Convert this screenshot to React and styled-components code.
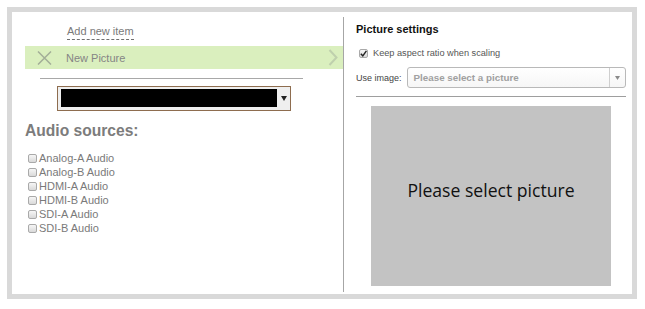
import React from "react";
import styled, { createGlobalStyle } from "styled-components";

const Global = createGlobalStyle`
  html, body { margin: 0; padding: 0; background: #ffffff; }
  body { font-family: "Liberation Sans", Arial, sans-serif; }
  * { box-sizing: border-box; }
`;

const Frame = styled.div`
  margin: 7px 0 0 7px;
  width: 630px;
  height: 292px;
  border: 5px solid #d9d9d9;
  background: #fff;
  display: flex;
  padding: 5px 0 2px 0;
`;

const LeftCol = styled.div`
  width: 332px;
  border-right: 1px solid #a6a6a6;
  display: flex;
  flex-direction: column;
  padding-top: 8px;
`;

const RightCol = styled.div`
  flex: 1;
  display: flex;
  flex-direction: column;
  padding: 5px 6px 0 12px;
  margin-bottom: -2px;
`;

const AddLink = styled.span`
  align-self: flex-start;
  margin-left: 55px;
  font-size: 11px;
  line-height: 13px;
  color: #7a7a7a;
  padding-bottom: 1px;
  border-bottom: 1px dashed #707070;
`;

const ItemRow = styled.div`
  margin: 6px 0 0 13px;
  height: 23px;
  background: #daefbe;
  display: flex;
  align-items: center;
  padding-left: 12px;
`;

const ItemText = styled.span`
  margin-left: 14px;
  font-size: 11px;
  color: #858585;
  flex: 1;
`;

const Rule = styled.div`
  height: 1px;
  background: ${(p) => p.color || "#a8a8a8"};
  margin: ${(p) => p.m};
  width: ${(p) => p.w};
`;

const DarkSelect = styled.div`
  margin: 7px 0 0 45px;
  width: 234px;
  height: 25px;
  border: 1px solid #8e6d4f;
  background: #efefef;
  display: flex;
  align-items: center;
  padding: 2px 0 3px 3px;
`;

const BlackBar = styled.div`
  width: 216px;
  height: 18px;
  background: #000;
  align-self: flex-start;
`;

const ArrowBox = styled.div`
  flex: 1;
  display: flex;
  justify-content: center;
  align-items: center;
`;

const SectionTitle = styled.div`
  margin: 11px 0 0 13px;
  font-size: 15.6px;
  line-height: 18px;
  font-weight: bold;
  color: #7c7c7c;
`;

const SourceList = styled.div`
  margin: 11px 0 0 16px;
  display: flex;
  flex-direction: column;
`;

const SourceRow = styled.label`
  display: flex;
  align-items: center;
  height: 14px;
  font-size: 11px;
  color: #7a7a7a;
  gap: 2px;
`;

const Box = styled.span`
  width: 9px;
  height: 9px;
  border: 1px solid #a9a9a9;
  border-radius: 2px;
  background: linear-gradient(#f6f6f6, #d9d9d9);
  display: inline-flex;
  align-items: center;
  justify-content: center;
  flex: none;
  margin-top: ${(p) => p.mt || "1px"};
`;

const Heading = styled.div`
  font-size: 11px;
  line-height: 14px;
  font-weight: bold;
  color: #111;
`;

const CheckRow = styled.div`
  margin: 11px 0 0 3px;
  height: 12px;
  display: flex;
  align-items: center;
  gap: 5px;
  font-size: 9.2px;
  color: #555;
`;

const FieldRow = styled.div`
  margin-top: 8px;
  display: flex;
  align-items: center;
  gap: 5px;
  font-size: 9px;
  color: #444;
`;

const Select = styled.div`
  width: 219px;
  height: 21px;
  border: 1px solid #b9b9b9;
  border-radius: 3px;
  background: linear-gradient(#ffffff, #f6f6f6);
  display: flex;
  align-items: stretch;
`;

const SelectValue = styled.span`
  flex: 1;
  display: flex;
  align-items: center;
  padding-left: 6px;
  font-size: 9.8px;
  font-weight: bold;
  color: #a0a0a0;
`;

const SelectArrow = styled.span`
  width: 16px;
  border-left: 1px solid #cfcfcf;
  display: flex;
  align-items: center;
  justify-content: center;
`;

const Preview = styled.div`
  margin: 9px 0 0 15px;
  width: 240px;
  height: 180px;
  background: #c3c3c3;
  display: flex;
  align-items: center;
  justify-content: center;
  font-family: "Open Sans", "Noto Sans", sans-serif;
  font-size: 17.6px;
  color: #111;
  padding-bottom: 12px;
`;

const sources = [
  "Analog-A Audio",
  "Analog-B Audio",
  "HDMI-A Audio",
  "HDMI-B Audio",
  "SDI-A Audio",
  "SDI-B Audio",
];

export default function App() {
  return (
    <>
      <Global />
      <Frame>
        <LeftCol>
          <AddLink>Add new item</AddLink>
          <ItemRow>
            <svg width="15" height="14" viewBox="0 0 15 14">
              <path d="M1 0.5 L14 13.5 M14 0.5 L1 13.5" stroke="#a3ae98" strokeWidth="1.5" fill="none" />
            </svg>
            <ItemText>New Picture</ItemText>
            <svg width="10" height="17" viewBox="0 0 10 17" style={{ marginRight: 5 }}>
              <path d="M1.5 1 L8.5 8.5 L1.5 16" stroke="#bfd0ad" strokeWidth="2" fill="none" />
            </svg>
          </ItemRow>
          <Rule m="9px 0 0 28px" w="263px" color="#a8a8a8" />
          <DarkSelect>
            <BlackBar />
            <ArrowBox>
              <svg width="6" height="5" viewBox="0 0 6 5">
                <polygon points="0,0 6,0 3,5" fill="#222" />
              </svg>
            </ArrowBox>
          </DarkSelect>
          <SectionTitle>Audio sources:</SectionTitle>
          <SourceList>
            {sources.map((s) => (
              <SourceRow key={s}>
                <Box />
                {s}
              </SourceRow>
            ))}
          </SourceList>
        </LeftCol>
        <RightCol>
          <Heading>Picture settings</Heading>
          <CheckRow>
            <Box mt="0px">
              <svg width="7" height="7" viewBox="0 0 7 7">
                <path d="M0.8 3.8 L2.8 5.8 L6.4 0.8" stroke="#222" strokeWidth="1.4" fill="none" />
              </svg>
            </Box>
            Keep aspect ratio when scaling
          </CheckRow>
          <FieldRow>
            Use image:
            <Select>
              <SelectValue>Please select a picture</SelectValue>
              <SelectArrow>
                <svg width="5" height="4" viewBox="0 0 5 4">
                  <polygon points="0,0 5,0 2.5,4" fill="#8a8a8a" />
                </svg>
              </SelectArrow>
            </Select>
          </FieldRow>
          <Rule m="8px 0 0 0" w="270px" color="#9e9e9e" />
          <Preview>Please select picture</Preview>
        </RightCol>
      </Frame>
    </>
  );
}
